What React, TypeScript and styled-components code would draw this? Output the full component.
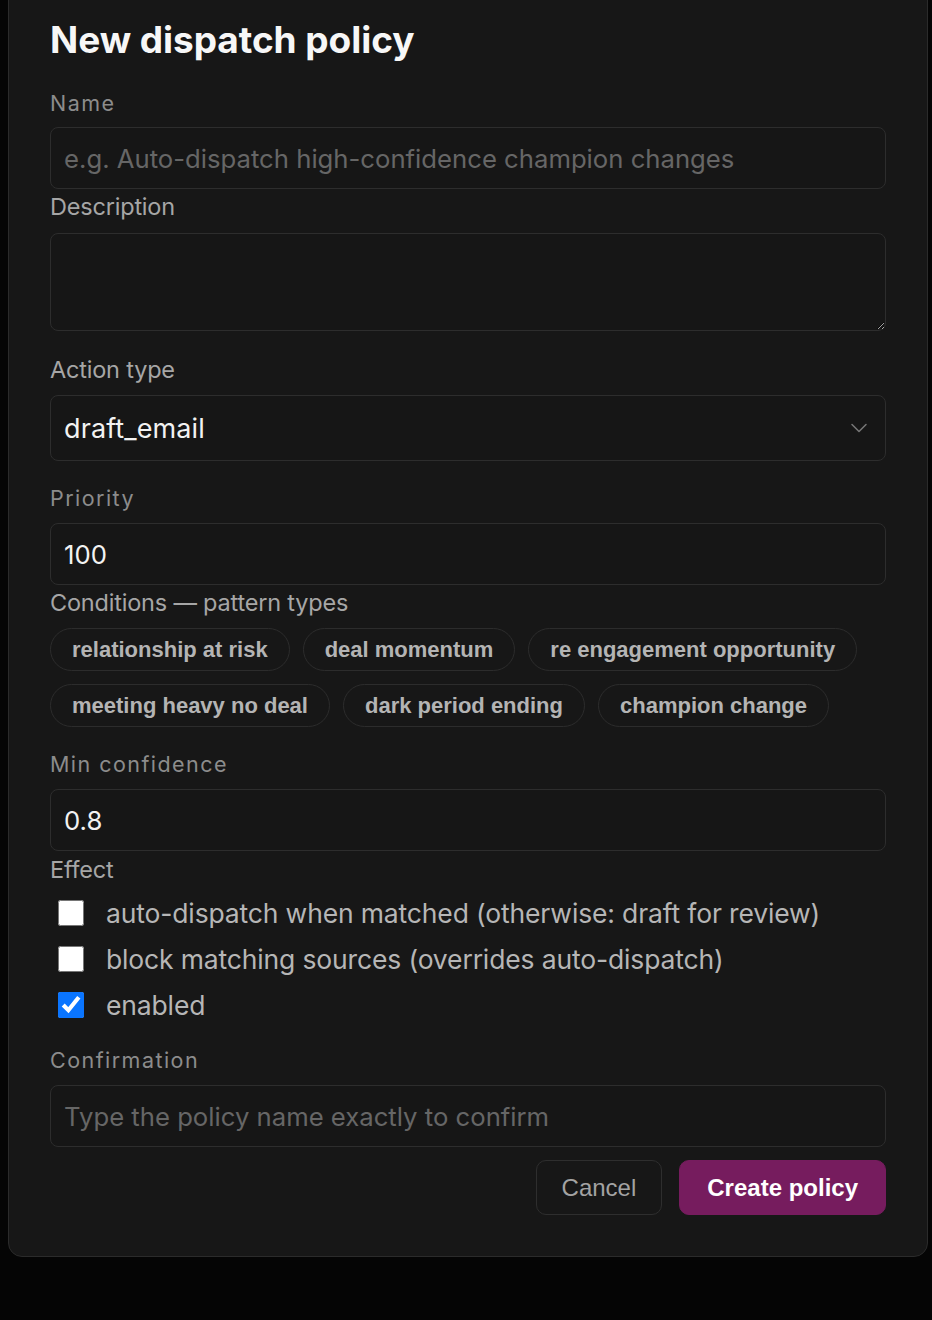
import { ChevronDown } from "lucide-react";
import styled, { createGlobalStyle } from "styled-components";

const GlobalStyle = createGlobalStyle`
  html, body {
    margin: 0;
    background: #050505;
  }
  * {
    box-sizing: border-box;
  }
`;

const Page = styled.div`
  padding: 0 4px 0 8px;
  font-family: Inter, "Noto Sans", sans-serif;
`;

const Card = styled.div`
  width: 920px;
  margin-top: -30px;
  padding: 47px 41px 41px;
  background: #171717;
  border: 1px solid #2b2b2b;
  border-radius: 14px;
  display: flex;
  flex-direction: column;
`;

const Title = styled.h2`
  margin: 0;
  font-size: 37px;
  line-height: 44px;
  font-weight: 700;
  color: #f7f7f7;
  letter-spacing: -0.05px;
`;

const FieldLabel = styled.label<{ $mt: number }>`
  display: block;
  margin-top: ${({ $mt }) => $mt}px;
  font-size: 21.5px;
  line-height: 24px;
  letter-spacing: 1.45px;
  color: #8c8c8c;
`;

const SectionLabel = styled.div<{ $mt: number }>`
  margin-top: ${({ $mt }) => $mt}px;
  font-size: 23.5px;
  line-height: 28px;
  color: #a6a6a6;
  letter-spacing: -0.2px;
`;

const TextInput = styled.input<{ $mt: number }>`
  display: block;
  width: 100%;
  height: 62px;
  margin-top: ${({ $mt }) => $mt}px;
  padding: 0 13px;
  background: #161616;
  border: 1px solid #2d2d2d;
  border-radius: 8px;
  font-family: Inter, "Noto Sans", sans-serif;
  font-size: 25.7px;
  color: #f2f2f2;
  outline: none;

  &::placeholder {
    color: #666666;
  }
`;

const TextArea = styled.textarea`
  display: block;
  width: 100%;
  height: 98px;
  margin-top: 12px;
  padding: 12px 13px;
  background: #161616;
  border: 1px solid #2d2d2d;
  border-radius: 8px;
  font-family: Inter, "Noto Sans", sans-serif;
  font-size: 25px;
  color: #f2f2f2;
  outline: none;
  resize: vertical;
`;

const SelectBox = styled.div`
  margin-top: 11px;
  height: 66px;
  padding: 0 12px 0 13px;
  display: flex;
  align-items: center;
  justify-content: space-between;
  background: #161616;
  border: 1px solid #2d2d2d;
  border-radius: 8px;
  font-size: 27px;
  color: #f2f2f2;
  letter-spacing: 0.1px;

  svg {
    color: #767676;
  }
`;

const ChipWrap = styled.div`
  margin-top: 11px;
  display: flex;
  flex-wrap: wrap;
  gap: 13px;
`;

const Chip = styled.button`
  height: 43px;
  padding: 0 21px;
  background: transparent;
  border: 1px solid #2c2c2c;
  border-radius: 999px;
  font-family: "Liberation Sans", Arial, sans-serif;
  font-weight: 700;
  font-size: 22px;
  color: #b4b4b4;
`;

const CheckList = styled.div`
  margin-top: 6px;
  display: flex;
  flex-direction: column;
`;

const CheckRow = styled.label`
  height: 46px;
  display: flex;
  align-items: center;
  gap: 22px;
  padding-left: 8px;
  font-size: 26.5px;
  color: #b6b6b6;
  letter-spacing: -0.15px;

  input {
    width: 26px;
    height: 26px;
    margin: 0;
    accent-color: #0a75ff;
  }
`;

const Actions = styled.div`
  margin-top: 13px;
  display: flex;
  justify-content: flex-end;
  gap: 17px;
`;

const Button = styled.button<{ $primary?: boolean }>`
  height: 55px;
  padding: 0 ${({ $primary }) => ($primary ? 27 : 25)}px;
  border-radius: 10px;
  font-family: "Liberation Sans", Arial, sans-serif;
  font-size: 24px;
  font-weight: ${({ $primary }) => ($primary ? 700 : 400)};
  color: ${({ $primary }) => ($primary ? "#ffffff" : "#a3a3a3")};
  background: ${({ $primary }) => ($primary ? "#761c5e" : "transparent")};
  border: 1px solid ${({ $primary }) => ($primary ? "#761c5e" : "#2e2e2e")};
`;

const patterns = [
  "relationship at risk",
  "deal momentum",
  "re engagement opportunity",
  "meeting heavy no deal",
  "dark period ending",
  "champion change",
];

const effects = [
  { label: "auto-dispatch when matched (otherwise: draft for review)", checked: false },
  { label: "block matching sources (overrides auto-dispatch)", checked: false },
  { label: "enabled", checked: true },
];

export default function App() {
  return (
    <Page>
      <GlobalStyle />
      <Card>
        <Title>New dispatch policy</Title>

        <FieldLabel $mt={29}>Name</FieldLabel>
        <TextInput
          $mt={12}
          placeholder="e.g. Auto-dispatch high-confidence champion changes"
        />

        <SectionLabel $mt={4}>Description</SectionLabel>
        <TextArea />

        <SectionLabel $mt={25}>Action type</SectionLabel>
        <SelectBox>
          draft_email
          <ChevronDown size={28} strokeWidth={1.3} />
        </SelectBox>

        <FieldLabel $mt={25}>Priority</FieldLabel>
        <TextInput $mt={13} defaultValue="100" />

        <SectionLabel $mt={4}>Conditions — pattern types</SectionLabel>
        <ChipWrap>
          {patterns.map((p) => (
            <Chip key={p} type="button">
              {p}
            </Chip>
          ))}
        </ChipWrap>

        <FieldLabel $mt={25}>Min confidence</FieldLabel>
        <TextInput $mt={13} defaultValue="0.8" />

        <SectionLabel $mt={5}>Effect</SectionLabel>
        <CheckList>
          {effects.map((e) => (
            <CheckRow key={e.label}>
              <input type="checkbox" defaultChecked={e.checked} />
              {e.label}
            </CheckRow>
          ))}
        </CheckList>

        <FieldLabel $mt={20}>Confirmation</FieldLabel>
        <TextInput $mt={13} placeholder="Type the policy name exactly to confirm" />

        <Actions>
          <Button type="button">Cancel</Button>
          <Button type="button" $primary>
            Create policy
          </Button>
        </Actions>
      </Card>
    </Page>
  );
}
